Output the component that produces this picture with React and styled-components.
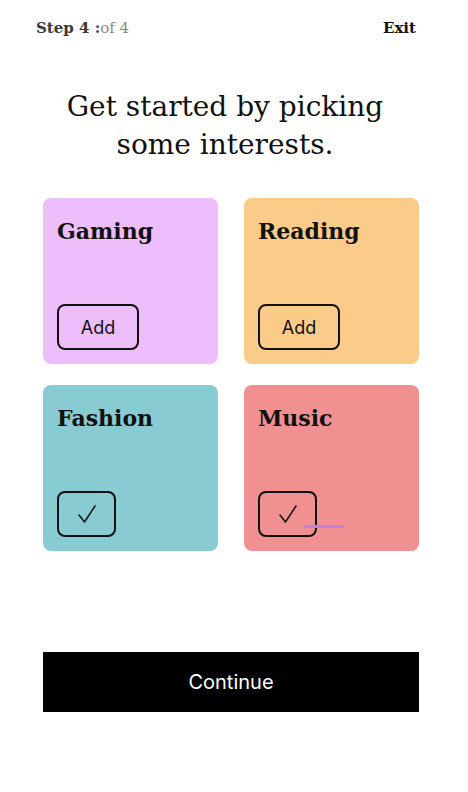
import React from 'react';
import styled, { createGlobalStyle } from 'styled-components';

const GlobalStyle = createGlobalStyle`
  html, body {
    margin: 0;
    padding: 0;
    background: #ffffff;
  }
  body {
    font-family: "DejaVu Serif", "Liberation Serif", serif;
    color: #111111;
  }
`;

const Page = styled.div`
  width: 468px;
  min-height: 792px;
  display: flex;
  flex-direction: column;
  box-sizing: border-box;
`;

const TopBar = styled.header`
  display: flex;
  justify-content: space-between;
  align-items: center;
  height: 55px;
  padding: 0 52px 0 36px;
  font-size: 15px;
  font-weight: 700;
`;

const Step = styled.span`
  color: #3a3a3a;
`;

const Muted = styled.span`
  color: #8a8a8a;
  font-weight: 400;
`;

const ExitLink = styled.a`
  color: #111111;
  text-decoration: none;
`;

const Title = styled.h1`
  margin: 33px 18px 0 0;
  text-align: center;
  font-size: 28px;
  line-height: 38px;
  font-weight: 400;
  color: #111111;
`;

const Grid = styled.div`
  display: grid;
  grid-template-columns: 175px 175px;
  column-gap: 26px;
  row-gap: 21px;
  margin: 34px 0 0 43px;
`;

const Card = styled.div`
  position: relative;
  height: 166px;
  box-sizing: border-box;
  border-radius: 8px;
  background: ${p => p.color};
  padding: 17px 14px 14px 14px;
  display: flex;
  flex-direction: column;
  justify-content: space-between;
`;

const CardTitle = styled.h2`
  margin: 0;
  font-size: 22px;
  line-height: 32px;
  font-weight: 700;
  color: #111111;
`;

const ToggleButton = styled.button`
  align-self: flex-start;
  box-sizing: border-box;
  height: 46px;
  width: ${p => (p.selected ? '59px' : '82px')};
  border: 2px solid #111111;
  border-radius: 8px;
  background: transparent;
  font-family: Inter, "Liberation Sans", sans-serif;
  font-size: 18px;
  color: #111111;
  display: flex;
  align-items: center;
  justify-content: center;
  padding: 0;
`;

const Streak = styled.span`
  position: absolute;
  left: 60px;
  bottom: 23px;
  width: 40px;
  height: 3px;
  background: #c182de;
`;

const Footer = styled.div`
  margin: 101px 0 0 43px;
`;

const ContinueButton = styled.button`
  width: 376px;
  height: 60px;
  border: none;
  background: #000000;
  color: #ffffff;
  font-family: Inter, "Liberation Sans", sans-serif;
  font-size: 20px;
`;

const Check = () => (
  <svg width="20" height="22" viewBox="0 0 20 22" fill="none">
    <path d="M2 12 L7.5 19 L18 3" stroke="#111" strokeWidth="1.5" strokeLinecap="round" strokeLinejoin="round" />
  </svg>
);

const interests = [
  { name: 'Gaming', color: '#edbefb', selected: false },
  { name: 'Reading', color: '#facb89', selected: false },
  { name: 'Fashion', color: '#88cbd2', selected: true },
  { name: 'Music', color: '#f09091', selected: true, streak: true },
];

export default function App() {
  return (
    <Page>
      <GlobalStyle />
      <TopBar>
        <Step>
          Step 4 :<Muted>of 4</Muted>
        </Step>
        <ExitLink href="#">Exit</ExitLink>
      </TopBar>
      <Title>
        Get started by picking
        <br />
        some interests.
      </Title>
      <Grid>
        {interests.map(item => (
          <Card key={item.name} color={item.color}>
            <CardTitle>{item.name}</CardTitle>
            <ToggleButton selected={item.selected}>
              {item.selected ? <Check /> : 'Add'}
            </ToggleButton>
            {item.streak && <Streak />}
          </Card>
        ))}
      </Grid>
      <Footer>
        <ContinueButton>Continue</ContinueButton>
      </Footer>
    </Page>
  );
}
